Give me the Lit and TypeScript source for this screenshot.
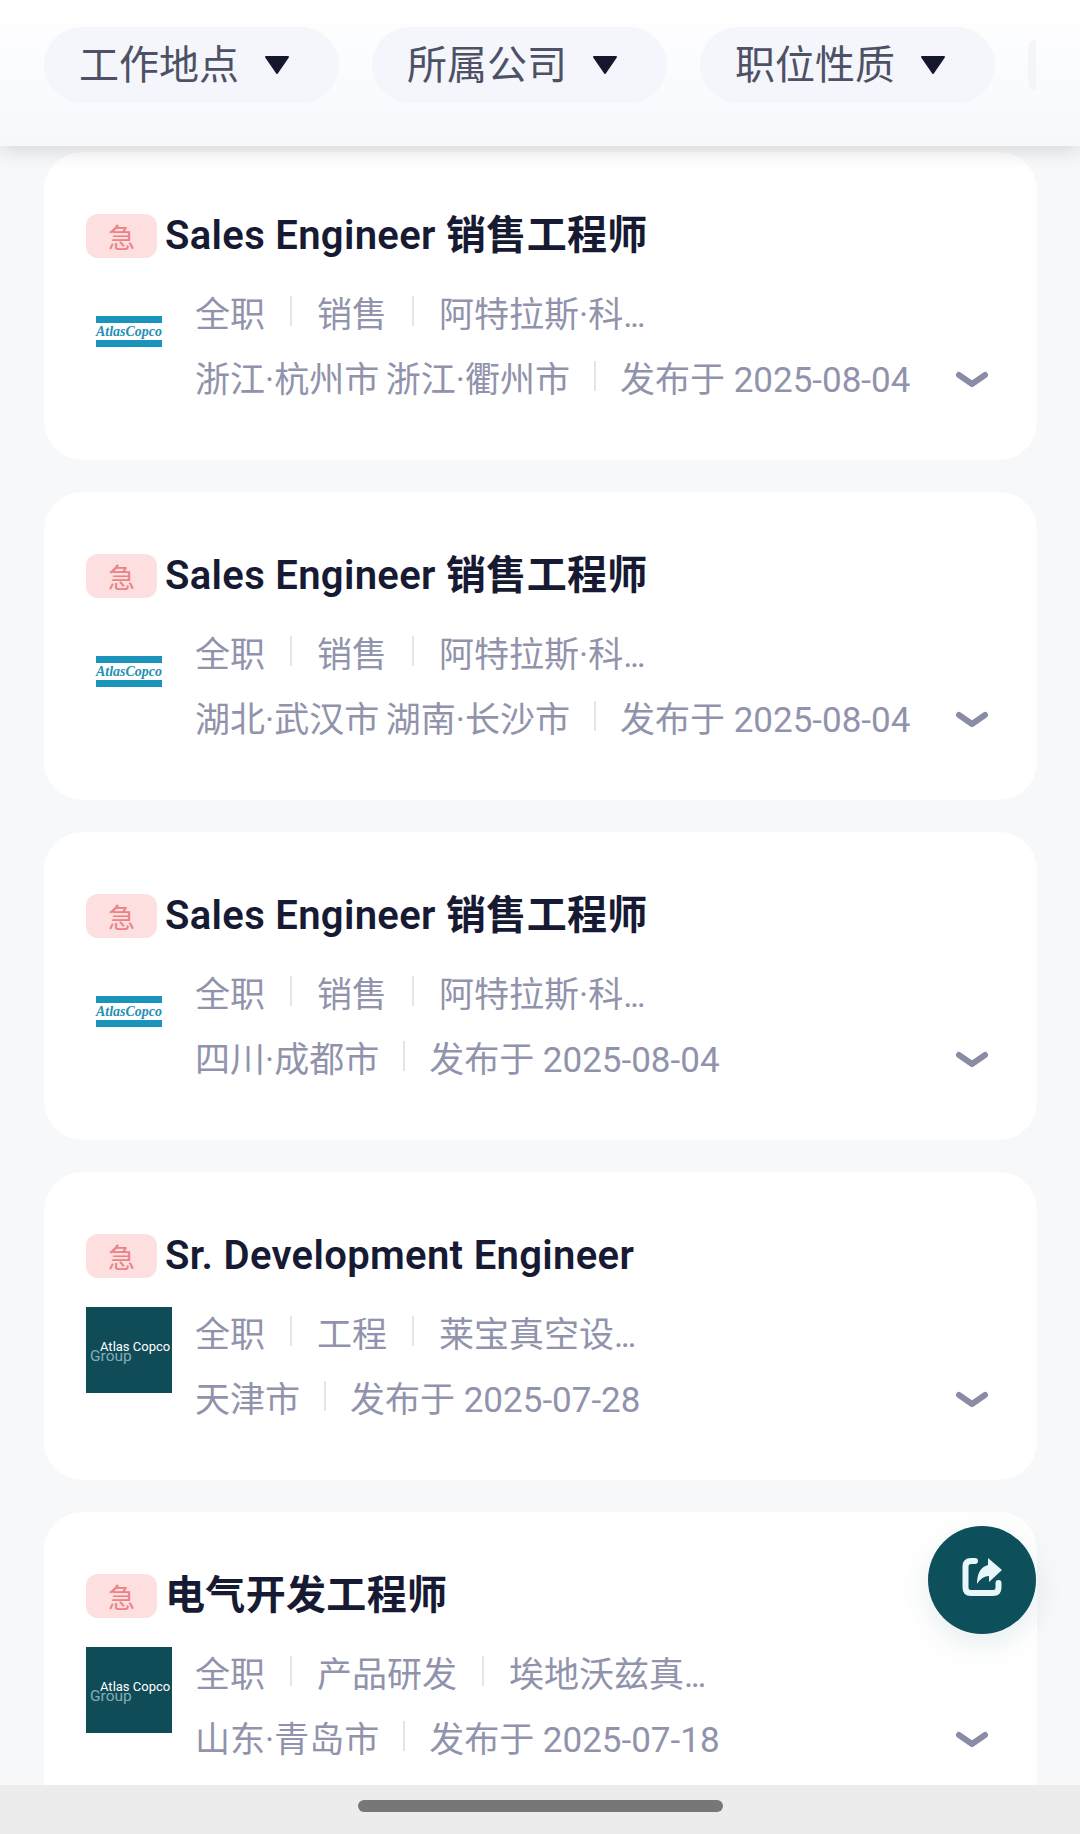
import { LitElement, html, css, nothing } from 'lit';
import { customElement } from 'lit/decorators.js';

type Logo = 'stripe' | 'group';

interface Job {
    title: string;
    logo: Logo;
    tags: string[];
    places: string;
    date: string;
}

const JOBS: Job[] = [
    { title: 'Sales Engineer 销售工程师', logo: 'stripe', tags: ['全职', '销售', '阿特拉斯·科...'], places: '浙江·杭州市 浙江·衢州市', date: '发布于 2025-08-04' },
    { title: 'Sales Engineer 销售工程师', logo: 'stripe', tags: ['全职', '销售', '阿特拉斯·科...'], places: '湖北·武汉市 湖南·长沙市', date: '发布于 2025-08-04' },
    { title: 'Sales Engineer 销售工程师', logo: 'stripe', tags: ['全职', '销售', '阿特拉斯·科...'], places: '四川·成都市', date: '发布于 2025-08-04' },
    { title: 'Sr. Development Engineer', logo: 'group', tags: ['全职', '工程', '莱宝真空设...'], places: '天津市', date: '发布于 2025-07-28' },
    { title: '电气开发工程师', logo: 'group', tags: ['全职', '产品研发', '埃地沃兹真...'], places: '山东·青岛市', date: '发布于 2025-07-18' },
];

const FILTERS = ['工作地点', '所属公司', '职位性质'];

@customElement('app-root')
export class AppRoot extends LitElement {
    static styles = css`
        :host {
            display: block;
            position: relative;
            width: 1080px;
            height: 1834px;
            overflow: hidden;
            background: #f6f8fa;
            font-family: Roboto, "Noto Sans CJK SC", sans-serif;
        }

        .header {
            position: relative;
            z-index: 1;
            height: 146px;
            box-sizing: border-box;
            padding: 27px 0 0 44px;
            display: flex;
            align-items: flex-start;
            gap: 33px;
            background: linear-gradient(#ffffff, #f6f8fc);
            box-shadow: 0 6px 18px rgba(0, 0, 0, 0.12);
        }

        .pill {
            flex: none;
            width: 295px;
            height: 76px;
            box-sizing: border-box;
            padding-left: 35px;
            display: flex;
            align-items: center;
            gap: 25px;
            border-radius: 38px;
            background: #f4f6fb;
            color: #4e5166;
            font-size: 40px;
            line-height: 70px;
        }

        .pill span {
            margin-top: 2px;
        }

        .sliver {
            flex: none;
            width: 8px;
            height: 50px;
            margin-top: 13px;
            border-radius: 8px 0 0 8px;
            background: #f3f5fa;
        }

        .caret {
            width: 26px;
            height: 20px;
        }

        .list {
            display: flex;
            flex-direction: column;
            gap: 32px;
            padding: 6px 43px 0 44px;
        }

        .card {
            flex: none;
            height: 308px;
            box-sizing: border-box;
            padding: 62px 47px 0 42px;
            background: #fff;
            border-radius: 38px;
        }

        .top {
            display: flex;
            align-items: center;
            gap: 8px;
            height: 44px;
            color: #171a33;
            font-size: 40px;
            font-weight: 600;
            white-space: nowrap;
        }

        .title {
            line-height: 44px;
            letter-spacing: 0.33px;
        }

        .urgent {
            flex: none;
            width: 71px;
            height: 44px;
            display: flex;
            align-items: center;
            justify-content: center;
            border-radius: 12px;
            background: #fddfe0;
            color: #ec8286;
            font-size: 27px;
            font-weight: 400;
            letter-spacing: 0;
        }

        .body {
            display: flex;
            align-items: flex-start;
            gap: 23px;
            margin-top: 29px;
        }

        .logo {
            flex: none;
            width: 86px;
            height: 86px;
            display: block;
        }

        .info {
            flex: 1;
            display: flex;
            flex-direction: column;
            gap: 21px;
            padding-top: 2px;
            color: #9093ab;
            font-size: 35px;
        }

        .row {
            display: flex;
            align-items: center;
            height: 44px;
            white-space: nowrap;
        }

        .sep {
            flex: none;
            width: 2px;
            height: 30px;
            margin: 0 25px;
            background: #e3e4ec;
        }

        .meta .sep {
            margin: 0 24px;
        }

        .places {
            word-spacing: -2px;
        }

        .dots {
            letter-spacing: -2.5px;
        }

        .chevron {
            width: 36px;
            height: 22px;
            margin: 7px 0 0 auto;
        }

        .fab {
            position: absolute;
            left: 928px;
            top: 1526px;
            z-index: 2;
            width: 108px;
            height: 108px;
            display: flex;
            align-items: center;
            justify-content: center;
            border-radius: 50%;
            background: #0e4f5c;
            box-shadow: 0 10px 30px rgba(14, 79, 92, 0.1);
        }

        .fab svg {
            width: 44px;
            height: 44px;
        }

        .home-bar {
            position: absolute;
            left: 0;
            right: 0;
            bottom: 0;
            z-index: 2;
            height: 49px;
            display: flex;
            justify-content: center;
            padding-top: 15px;
            box-sizing: border-box;
            background: #ececec;
        }

        .handle {
            width: 365px;
            height: 12px;
            border-radius: 6px;
            background: #777;
        }
    `;

    private renderLogo(logo: Logo) {
        if (logo === 'stripe') {
            return html`
                <svg class="logo" viewBox="0 0 86 86">
                    <rect x="10" y="29" width="66" height="7" fill="#1b94bb"></rect>
                    <rect x="10" y="53" width="66" height="7" fill="#1b94bb"></rect>
                    <text x="10" y="48.5" textLength="66" lengthAdjust="spacingAndGlyphs"
                        font-family="Liberation Serif" font-style="italic" font-weight="700" font-size="15" fill="#1f8fb3">AtlasCopco</text>
                </svg>`;
        }
        return html`
            <svg class="logo" viewBox="0 0 86 86">
                <rect width="86" height="86" fill="#0f4c58"></rect>
                <text x="4" y="53.5" font-family="Roboto" font-size="15.5" fill="#86adb5">Group</text>
                <text x="14" y="44" font-family="Roboto" font-size="13" fill="#fff">Atlas Copco</text>
            </svg>`;
    }

    private renderTag(tag: string) {
        // truncated names keep their dots tight, like the app's ellipsis
        if (tag.endsWith('...')) {
            return html`<span>${tag.slice(0, -3)}<span class="dots">...</span></span>`;
        }
        return html`<span>${tag}</span>`;
    }

    private renderJob(job: Job) {
        return html`
            <div class="card">
                <div class="top">
                    <span class="urgent">急</span>
                    <span class="title">${job.title}</span>
                </div>
                <div class="body">
                    ${this.renderLogo(job.logo)}
                    <div class="info">
                        <div class="row">
                            ${job.tags.map((t, i) => html`${i ? html`<i class="sep"></i>` : nothing}${this.renderTag(t)}`)}
                        </div>
                        <div class="row meta">
                            <span class="places">${job.places}</span>
                            <i class="sep"></i>
                            <span>${job.date}</span>
                            <svg class="chevron" viewBox="0 0 36 22">
                                <path d="M5 6 L18 15 L31 6" fill="none" stroke="#8a8ca6" stroke-width="6" stroke-linecap="round" stroke-linejoin="round"></path>
                            </svg>
                        </div>
                    </div>
                </div>
            </div>`;
    }

    render() {
        return html`
            <div class="header">
                ${FILTERS.map((f) => html`
                    <div class="pill">
                        <span>${f}</span>
                        <svg class="caret" viewBox="0 0 26 20">
                            <path d="M2 2 H24 L13 18 Z" fill="#14172e" stroke="#14172e" stroke-width="2" stroke-linejoin="round"></path>
                        </svg>
                    </div>`)}
                <div class="sliver"></div>
            </div>
            <div class="list">${JOBS.map((j) => this.renderJob(j))}</div>
            <div class="fab">
                <svg viewBox="0 3 44 44">
                    <path d="M15 6 H11 Q5.5 6 5.5 11.5 V32.5 Q5.5 38 11 38 H33 Q38.5 38 38.5 32.5 V28" fill="none" stroke="#e8f6fa" stroke-width="6" stroke-linecap="round"></path>
                    <path d="M28 3 L42 15 L29 27 V21 Q22 21 17 29 Q17 13 28 10 Z" fill="#e8f6fa"></path>
                </svg>
            </div>
            <div class="home-bar"><div class="handle"></div></div>
        `;
    }
}
